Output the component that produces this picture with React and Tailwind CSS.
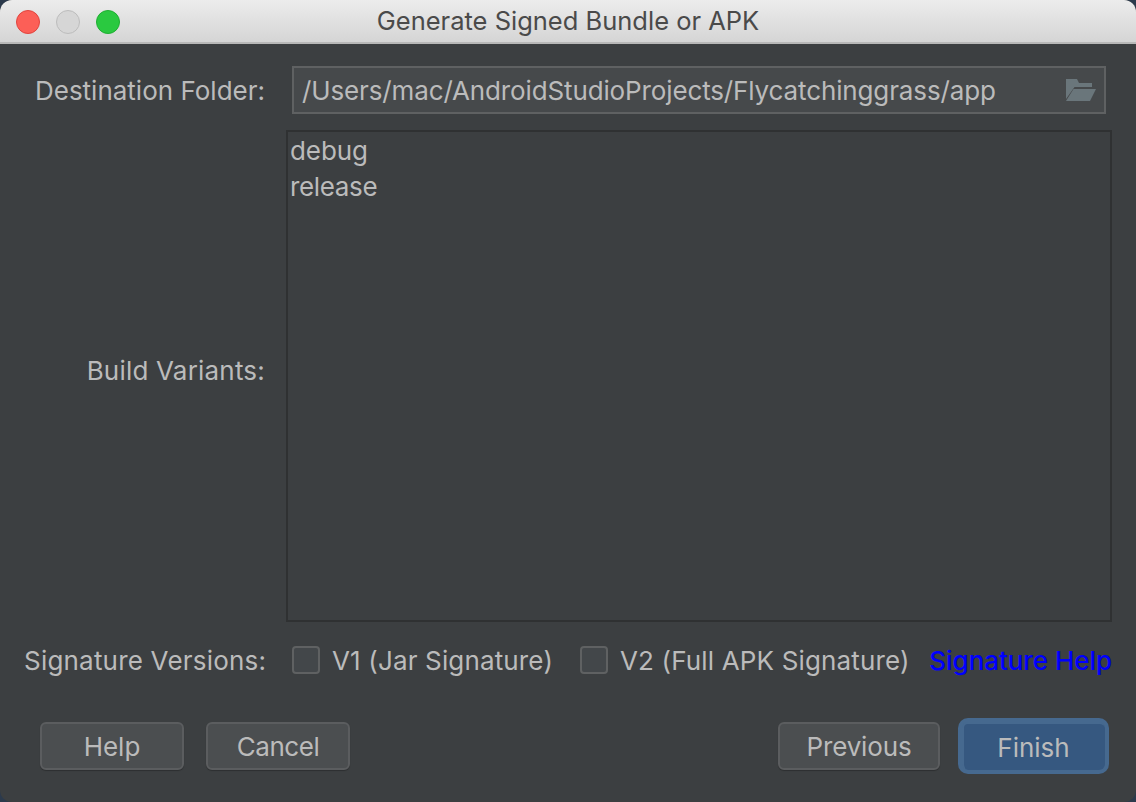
const sans = 'font-["Inter","Liberation_Sans",sans-serif]'

function Checkbox({ label }) {
  return (
    <label className="flex items-center">
      <span className="w-[28px] h-[28px] rounded-[4px] border-2 border-[#5f6162] bg-[#43474a]"></span>
      <span className="ml-[12px] pt-[2px] tracking-[0.15px]">{label}</span>
    </label>
  )
}

function Button({ children, className }) {
  return (
    <button className={`h-[48px] pt-[2px] rounded-[6px] text-[#bbbbbb] ${className}`}>
      {children}
    </button>
  )
}

function App() {
  return (
    <div className={`w-[1136px] h-[802px] bg-[#2c3a4c] text-[26px] leading-[32px] text-[#bbbbbb] ${sans}`}>
      <div className="w-full h-full rounded-[12px] overflow-hidden bg-[#3c3f41] flex flex-col">
        {/* Title bar */}
        <div className="relative h-[44px] shrink-0 flex items-center justify-center bg-gradient-to-b from-[#ececec] to-[#d5d5d5] border-b-2 border-[#b8b8b8]">
          <div className="absolute left-[16px] top-[10px] flex gap-[16px]">
            <span className="w-[24px] h-[24px] rounded-full bg-[#fc5f57] border border-[#e0443e]"></span>
            <span className="w-[24px] h-[24px] rounded-full bg-[#d6d6d6] border border-[#bcbcbc]"></span>
            <span className="w-[24px] h-[24px] rounded-full bg-[#2ac940] border border-[#1fae32]"></span>
          </div>
          <span className="text-[#4a4a4a] text-[25.5px]">Generate Signed Bundle or APK</span>
        </div>

        <div className="flex-1 flex flex-col pt-[22px] pl-[24px] pr-[24px]">
          {/* Destination */}
          <div className="flex items-center h-[48px]">
            <div className="w-[241px] pt-[2px] text-right shrink-0">Destination Folder:</div>
            <div className="ml-[27px] w-[814px] h-[48px] flex items-center justify-between border-2 border-[#5f6162] bg-[#46494b] pl-[8px] pr-[8px]">
              <span className="whitespace-nowrap pt-[2px] tracking-[-0.13px]">/Users/mac/AndroidStudioProjects/Flycatchinggrass/app</span>
              <svg width="30" height="22" viewBox="0 0 30 22" fill="none">
                <path d="M0 0h11l2 4h13v4H8.5L0 20V0z" fill="#6a767b" />
                <path d="M7.5 10H30l-6 12H0l7.5-12z" fill="#6a767b" />
              </svg>
            </div>
          </div>

          {/* Build variants */}
          <div className="flex mt-[16px] h-[492px]">
            <div className="w-[241px] pb-[10px] shrink-0 self-center text-right tracking-[0.2px]">Build Variants:</div>
            <div className="ml-[21px] w-[826px] border-2 border-[#2f3132] pl-[2px] pt-[1px] leading-[36px]">
              <div className="tracking-[-0.1px]">debug</div>
              <div className="tracking-[-0.35px]">release</div>
            </div>
          </div>

          {/* Signature versions */}
          <div className="flex items-center h-[40px] mt-[18px]">
            <div className="w-[241px] pt-[2px] shrink-0 text-right whitespace-nowrap tracking-[0.2px]">Signature Versions:</div>
            <div className="ml-[27px] flex items-center gap-[27px]">
              <Checkbox label="V1 (Jar Signature)" />
              <Checkbox label="V2 (Full APK Signature)" />
            </div>
            <a className="ml-auto pt-[2px] text-[#0000ff] font-medium tracking-[-0.05px] whitespace-nowrap">Signature Help</a>
          </div>

          {/* Buttons */}
          <div className="flex mt-[42px] pl-[16px]">
            <Button className="w-[144px] border-2 border-[#5b5d5f] bg-[#4b4e50] shadow-[0_1px_1px_rgba(0,0,0,0.25)]">Help</Button>
            <Button className="w-[144px] ml-[22px] border-2 border-[#5b5d5f] bg-[#4b4e50] shadow-[0_1px_1px_rgba(0,0,0,0.25)] tracking-[-0.45px]">Cancel</Button>
            <Button className="w-[162px] ml-auto border-2 border-[#5b5d5f] bg-[#4b4e50] shadow-[0_1px_1px_rgba(0,0,0,0.25)] tracking-[-0.15px]">Previous</Button>
            <Button className="w-[143px] ml-[22px] mr-[7px] pr-[2px] border-l-2 border-t-2 border-[#46698f] bg-[#365880] shadow-[0_0_0_4px_#46698f]">Finish</Button>
          </div>
        </div>
      </div>
    </div>
  )
}

export default App
